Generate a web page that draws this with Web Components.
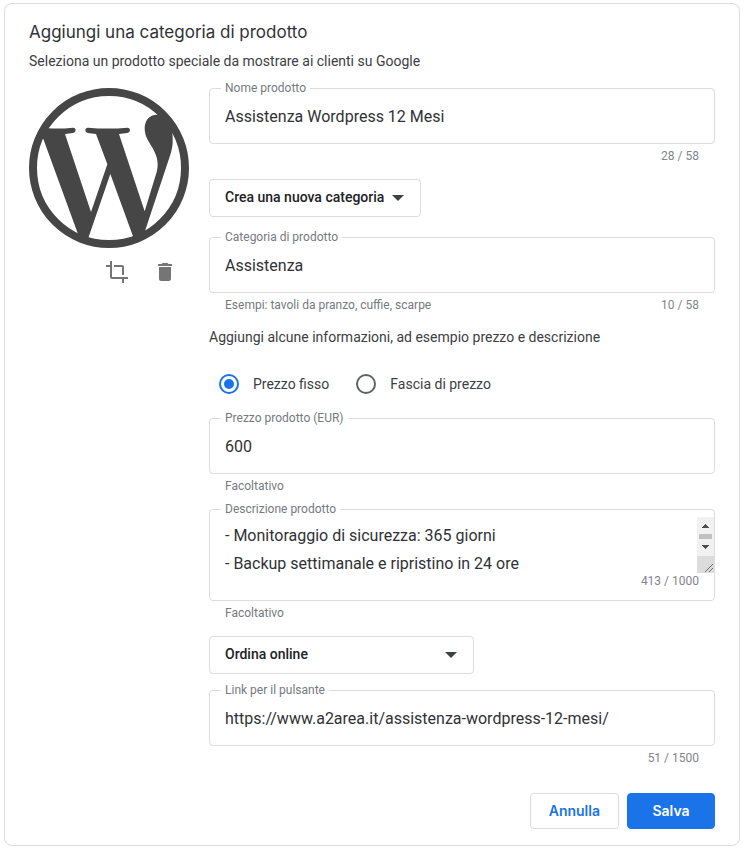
<!DOCTYPE html>
<html lang="it">
<head>
<meta charset="utf-8">
<meta name="viewport" content="width=device-width, initial-scale=1">
<title>Aggiungi una categoria di prodotto</title>
<style>
  body {
    margin: 3px 7px 5px 4px;
    background: #fff;
    color: #3c4043;
    font: 14px/20px Roboto, "Liberation Sans", sans-serif;
    --line: #dadce0;
    --muted: #757a7f;
    --ink: #303236;
    --accent: #1a73e8;
    --display: Inter, Roboto, sans-serif;
  }
</style>
</head>
<body>
<product-editor></product-editor>
<script>
class BaseElement extends HTMLElement {
  render(html) {
    const t = document.createElement('template');
    t.innerHTML = '<style>*{box-sizing:border-box}:host{display:block}:host([hidden]){display:none}</style>' + html;
    this.attachShadow({ mode: 'open' }).append(t.content.cloneNode(true));
  }
}

customElements.define('wp-logo', class extends BaseElement {
  connectedCallback() {
    this.render(`<style>svg{display:block;width:100%;aspect-ratio:1;fill:#464646}</style>
    <svg viewBox="27 24 480 480" role="img" aria-label="WordPress">
      <defs><clipPath id="disc"><circle cx="267" cy="264" r="230"/></clipPath></defs>
      <circle cx="267" cy="264" r="228" style="fill:none;stroke:#464646;stroke-width:24"/>
      <g clip-path="url(#disc)">
        <path d="M50 143L85 145Q122 147 159 143Q167 143 167 151Q167 158 159 159L135 162L213 396L262 253L228 162L203 159Q196 158 196 151Q196 143 204 143Q263 148 322 143Q330 143 330 151Q330 158 322 159L297 162L374 394L410 276C416 252 413 234 402 212C389 187 374 173 374 145C374 121 389 104 410 104L440 100L480 160L457 160C460 190 457 208 448 233L376 450L378 480L343 480L271 282L201 485L180 480L172 457L70 177L50 177Z"/>
      </g>
    </svg>`);
  }
});

const ICONS = {
  crop: 'M17 15h2V7c0-1.1-.9-2-2-2H9v2h8v8zM7 17V1H5v4H1v2h4v10c0 1.1.9 2 2 2h10v4h2v-4h4v-2H7z',
  trash: 'M6 19c0 1.1.9 2 2 2h8c1.1 0 2-.9 2-2V7H6v12zM19 4h-3.5l-1-1h-5l-1 1H5v2h14V4z'
};
customElements.define('icon-button', class extends BaseElement {
  connectedCallback() {
    this.render(`<style>
      button{display:grid;place-items:center;width:48px;height:48px;padding:0;border:0;border-radius:50%;background:none;cursor:pointer}
      svg{width:24px;height:24px;fill:#757575}</style>
    <button type="button" aria-label="${this.getAttribute('label')}"><svg viewBox="0 0 24 24"><path d="${ICONS[this.getAttribute('icon')]}"/></svg></button>`);
  }
});

customElements.define('outlined-field', class extends BaseElement {
  connectedCallback() {
    const a = n => this.getAttribute(n) || '';
    const multi = this.hasAttribute('multiline');
    const count = a('count') ? `<span class="count">${a('count')}</span>` : '';
    const control = multi
      ? `<div class="area"><textarea id="f" rows="2">${a('value')}</textarea>
          <svg class="bar" viewBox="0 0 17 56" aria-hidden="true" shape-rendering="crispEdges">
            <path fill="#f1f1f1" d="M0 0h17v39H0z"/><path fill="#c1c1c1" d="M2 17h13v5H2z"/>
            <path fill="#505050" d="M8 7h1v1h1v1h1v1h1v1H5v-1h1V9h1V8h1zM5 28h7v1h-1v1h-1v1H9v1H8v-1H7v-1H6v-1H5z"/>
            <path fill="#dcdcdc" d="M0 39h17v17H0z"/>
            <path fill="none" stroke="#6b6b6b" shape-rendering="auto" d="M8 55l8-8M12 55l4-4"/>
          </svg></div>${count}`
      : `<input id="f" type="text" value="${a('value')}">`;
    const below = (a('helper') || (!multi && count))
      ? `<div class="below"><span>${a('helper')}</span>${multi ? '' : count}</div>` : '';
    this.render(`<style>
      :host{font-size:12px;line-height:16px;color:var(--muted)}
      fieldset{min-width:0;margin:0;padding:0 0 7px 11px;border:1px solid var(--line);border-radius:4px}
      legend{padding:0 4px}
      label{display:block}
      input,textarea{display:block;width:100%;margin:0;border:0;outline:0;background:none;color:var(--ink);font-family:inherit;font-size:16px;resize:none}
      input{height:40px;padding:0 16px 0 4px}
      textarea{flex:1;min-width:0;height:61px;padding:5px 4px 0;line-height:28px;overflow:hidden}
      .area{display:flex;align-items:flex-start}
      .bar{width:17px;height:56px;flex:none}
      .below{display:flex;justify-content:space-between;padding:4px 16px 0}
      .count{display:block;text-align:right;color:#80868b}
      fieldset .count{margin:-5px 15px 4px 0}
    </style>
    <fieldset><legend><label for="f">${a('label')}</label></legend>${control}</fieldset>${below}`);
  }
});

customElements.define('outlined-select', class extends BaseElement {
  connectedCallback() {
    this.render(`<style>
      :host{display:grid;width:fit-content;max-width:100%}
      select,svg{grid-area:1/1}
      select{appearance:none;height:38px;margin:0;padding:0 35px 2px 15px;border:1px solid var(--line);border-radius:4px;background:#fff;color:#202124;font:500 14px/20px Roboto,sans-serif}
      svg{justify-self:end;align-self:center;width:12px;height:6px;margin-right:17px;fill:#3c4043;pointer-events:none}
    </style>
    <select aria-label="${this.getAttribute('label')}"><option>${this.getAttribute('value')}</option></select>
    <svg viewBox="0 0 12 6" aria-hidden="true"><path d="M0 0h12L6 6z"/></svg>`);
  }
});

customElements.define('price-type', class extends BaseElement {
  connectedCallback() {
    this.render(`<style>
      :host{display:flex;flex-wrap:wrap;gap:27px;padding-left:10px}
      label{display:flex;align-items:center;gap:14px;color:#3c4043}
      input{appearance:none;display:grid;place-items:center;width:20px;height:20px;margin:0;border:2px solid #5f6368;border-radius:50%}
      input:checked{border-color:var(--accent)}
      input:checked::before{content:"";width:10px;height:10px;border-radius:50%;background:var(--accent)}
    </style>
    <label><input type="radio" name="p" checked>Prezzo fisso</label>
    <label><input type="radio" name="p">Fascia di prezzo</label>`);
  }
});

customElements.define('action-button', class extends BaseElement {
  connectedCallback() {
    this.render(`<style>
      button{height:36px;min-width:88px;padding:0 18px;border:1px solid var(--line);border-radius:4px;background:#fff;color:var(--accent);font:600 14px/20px var(--display);cursor:pointer}
      :host([primary]) button{background:var(--accent);border-color:var(--accent);color:#fff}
    </style><button type="button"><slot></slot></button>`);
  }
});

customElements.define('product-editor', class extends BaseElement {
  connectedCallback() {
    this.render(`<style>
      :host{border:1px solid var(--line);border-radius:8px;padding:16px 24px}
      h1{margin:0;font:400 17px/24px var(--display);color:var(--ink)}
      p{margin:0}
      .intro{margin-top:7px}
      .cols{display:grid;grid-template-columns:160px minmax(0,1fr);gap:20px;align-items:start;margin-top:9px}
      .media{padding-top:8px}
      .tools{display:flex;justify-content:flex-end}
      form{display:flex;flex-direction:column}
      .s7{margin-top:7px}.s8{margin-top:8px}.s12{margin-top:12px}.s14{margin-top:14px}
      .s15{margin-top:15px}.s16{margin-top:16px}.s27{margin-top:27px}
      .wide{width:265px}
      .actions{display:flex;justify-content:flex-end;gap:8px;margin-top:27px}
    </style>
    <h1>Aggiungi una categoria di prodotto</h1>
    <p class="intro">Seleziona un prodotto speciale da mostrare ai clienti su Google</p>
    <div class="cols">
      <div class="media"><wp-logo></wp-logo>
        <div class="tools"><icon-button icon="crop" label="Ritaglia"></icon-button><icon-button icon="trash" label="Elimina"></icon-button></div>
      </div>
      <form>
        <outlined-field label="Nome prodotto" value="Assistenza Wordpress 12 Mesi" count="28 / 58"></outlined-field>
        <outlined-select class="s15" label="Categoria" value="Crea una nuova categoria"></outlined-select>
        <outlined-field class="s12" label="Categoria di prodotto" value="Assistenza" helper="Esempi: tavoli da pranzo, cuffie, scarpe" count="10 / 58"></outlined-field>
        <p class="s14">Aggiungi alcune informazioni, ad esempio prezzo e descrizione</p>
        <price-type class="s27"></price-type>
        <outlined-field class="s16" label="Prezzo prodotto (EUR)" value="600" helper="Facoltativo"></outlined-field>
        <outlined-field class="s7" multiline label="Descrizione prodotto" value="- Monitoraggio di sicurezza: 365 giorni&#10;- Backup settimanale e ripristino in 24 ore" helper="Facoltativo" count="413 / 1000"></outlined-field>
        <outlined-select class="s15 wide" label="Pulsante" value="Ordina online"></outlined-select>
        <outlined-field class="s8" label="Link per il pulsante" value="https://www.a2area.it/assistenza-wordpress-12-mesi/" count="51 / 1500"></outlined-field>
        <div class="actions"><action-button>Annulla</action-button><action-button primary>Salva</action-button></div>
      </form>
    </div>`);
  }
});
</script>
</body>
</html>
